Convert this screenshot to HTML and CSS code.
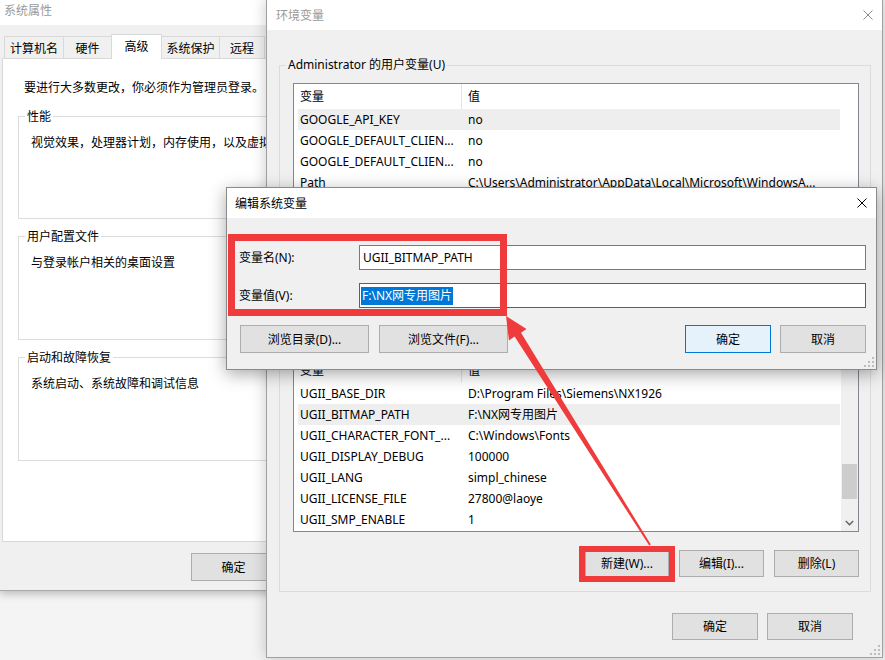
FILE: index.html
```html
<!DOCTYPE html>
<html lang="zh-CN">
<head>
<meta charset="utf-8">
<title>编辑系统变量</title>
<link rel="stylesheet" href="styles.css">
</head>
<body>

<section class="win sysprop">
  <div class="titlebar inactive"><span class="title">系统属性</span></div>
  <div class="sys-body">
    <div class="tabs">
      <div class="tab t1">计算机名</div>
      <div class="tab t2">硬件</div>
      <div class="tab t3 active">高级</div>
      <div class="tab t4">系统保护</div>
      <div class="tab t5">远程</div>
    </div>
    <div class="tabpanel">
      <p class="note">要进行大多数更改，你必须作为管理员登录。</p>
      <div class="group g1">
        <div class="glabel">性能</div>
        <p class="gtext">视觉效果，处理器计划，内存使用，以及虚拟内存</p>
      </div>
      <div class="group g2">
        <div class="glabel">用户配置文件</div>
        <p class="gtext">与登录帐户相关的桌面设置</p>
      </div>
      <div class="group g2">
        <div class="glabel">启动和故障恢复</div>
        <p class="gtext">系统启动、系统故障和调试信息</p>
      </div>
    </div>
    <div class="btnrow sys-btns">
      <button class="btn w85">确定</button>
      <button class="btn w85">取消</button>
      <button class="btn w85">应用(A)</button>
    </div>
  </div>
</section>

<section class="win envvars">
  <div class="titlebar inactive">
    <span class="title">环境变量</span>
    <svg class="close" viewBox="0 0 10 10" width="10" height="10"><path d="M0.5 0.5 L9.5 9.5 M9.5 0.5 L0.5 9.5" stroke="#8a8a8a" stroke-width="1" fill="none"/></svg>
  </div>
  <div class="env-body">
    <div class="egroup eg1">
      <div class="glabel">Administrator 的用户变量(U)</div>
      <div class="listview lv1">
        <div class="lv-main">
          <div class="lv-head"><span class="c1">变量</span><span class="c2">值</span></div>
          <div class="lv-row sel"><span class="c1">GOOGLE_API_KEY</span><span class="c2">no</span></div>
          <div class="lv-row"><span class="c1">GOOGLE_DEFAULT_CLIEN...</span><span class="c2">no</span></div>
          <div class="lv-row"><span class="c1">GOOGLE_DEFAULT_CLIEN...</span><span class="c2">no</span></div>
          <div class="lv-row"><span class="c1">Path</span><span class="c2">C:\Users\Administrator\AppData\Local\Microsoft\WindowsA...</span></div>
        </div>
      </div>
      <div class="btnrow lv-btns">
        <button class="btn b84">新建(N)...</button>
        <button class="btn b85">编辑(E)...</button>
        <button class="btn b85">删除(D)</button>
      </div>
    </div>
    <div class="egroup eg2" aria-label="系统变量(S)">
      <div class="listview lv2">
        <div class="lv-main">
          <div class="lv-head"><span class="c1">变量</span><span class="c2">值</span></div>
          <div class="lv-row"><span class="c1">UGII_BASE_DIR</span><span class="c2">D:\Program Files\Siemens\NX1926</span></div>
          <div class="lv-row sel"><span class="c1">UGII_BITMAP_PATH</span><span class="c2">F:\NX网专用图片</span></div>
          <div class="lv-row"><span class="c1">UGII_CHARACTER_FONT_...</span><span class="c2">C:\Windows\Fonts</span></div>
          <div class="lv-row"><span class="c1">UGII_DISPLAY_DEBUG</span><span class="c2">100000</span></div>
          <div class="lv-row"><span class="c1">UGII_LANG</span><span class="c2">simpl_chinese</span></div>
          <div class="lv-row"><span class="c1">UGII_LICENSE_FILE</span><span class="c2">27800@laoye</span></div>
          <div class="lv-row"><span class="c1">UGII_SMP_ENABLE</span><span class="c2">1</span></div>
        </div>
        <div class="scrollbar">
          <div class="sb-btn"><svg viewBox="0 0 9 6" width="9" height="6"><path d="M0.8 5 L4.5 1.3 L8.2 5" stroke="#606060" stroke-width="1.4" fill="none"/></svg></div>
          <div class="sb-track"><div class="sb-thumb"></div></div>
          <div class="sb-btn"><svg viewBox="0 0 9 6" width="9" height="6"><path d="M0.8 1 L4.5 4.7 L8.2 1" stroke="#606060" stroke-width="1.4" fill="none"/></svg></div>
        </div>
      </div>
      <div class="btnrow lv-btns">
        <button class="btn b84">新建(W)...</button>
        <button class="btn b85">编辑(I)...</button>
        <button class="btn b85">删除(L)</button>
      </div>
    </div>
    <div class="btnrow env-btns">
      <button class="btn b86">确定</button>
      <button class="btn b86">取消</button>
    </div>
  </div>
  <svg class="grip" viewBox="0 0 10 10" width="10" height="10"><g fill="#bdbdbd"><rect x="8" y="0" width="2" height="2"/><rect x="8" y="4" width="2" height="2"/><rect x="4" y="4" width="2" height="2"/><rect x="8" y="8" width="2" height="2"/><rect x="4" y="8" width="2" height="2"/><rect x="0" y="8" width="2" height="2"/></g></svg>
</section>

<section class="win editdlg">
  <div class="titlebar">
    <span class="title">编辑系统变量</span>
    <svg class="close" viewBox="0 0 10 10" width="10" height="10"><path d="M0.5 0.5 L9.5 9.5 M9.5 0.5 L0.5 9.5" stroke="#000" stroke-width="1" fill="none"/></svg>
  </div>
  <div class="dlg-body">
    <div class="field">
      <span class="flabel">变量名(N):</span>
      <div class="finput">UGII_BITMAP_PATH</div>
    </div>
    <div class="field">
      <span class="flabel">变量值(V):</span>
      <div class="finput focus"><span class="seltext">F:\NX网专用图片</span></div>
    </div>
    <div class="btnrow dlg-btns">
      <button class="btn b129">浏览目录(D)...</button>
      <button class="btn b129">浏览文件(F)...</button>
      <button class="btn b86 default ok">确定</button>
      <button class="btn b86">取消</button>
    </div>
  </div>
  <svg class="grip" viewBox="0 0 10 10" width="10" height="10"><g fill="#bdbdbd"><rect x="8" y="0" width="2" height="2"/><rect x="8" y="4" width="2" height="2"/><rect x="4" y="4" width="2" height="2"/><rect x="8" y="8" width="2" height="2"/><rect x="4" y="8" width="2" height="2"/><rect x="0" y="8" width="2" height="2"/></g></svg>
</section>

<div class="hl hl1"></div>
<div class="hl hl2"></div>
<svg class="arrow" viewBox="0 0 885 660" width="885" height="660">
  <polygon points="506,316 526.5,329 521,332.8 650.8,544.6 649.2,545.6 514.6,336.6 509,340.5" fill="#ef3b3b"/>
</svg>

</body>
</html>
```

FILE: styles.css
```css
* { box-sizing: border-box; margin: 0; padding: 0; }
html, body { width: 885px; height: 660px; }
body {
  position: relative;
  overflow: hidden;
  background: #f4f4f4;
  font-family: "Noto Sans", "Noto Sans CJK SC", sans-serif;
  font-size: 12px;
  line-height: 16px;
  color: #000;
}
button { font: inherit; color: inherit; cursor: default; }

/* generic window */
.win {
  position: absolute;
  display: flex;
  flex-direction: column;
  background: #f0f0f0;
  border: 1px solid #aaaaaa;
}
.titlebar {
  flex: none;
  height: 30px;
  padding-top: 2px;
  background: #fff;
  display: flex;
  align-items: center;
  justify-content: space-between;
  white-space: nowrap;
}
.titlebar .title { color: #000; }
.titlebar.inactive .title { color: #9a9a9a; }
.close { flex: none; margin-right: 9px; margin-top: -2px; }
.grip { position: absolute; right: 2px; bottom: 2px; }

.btnrow { display: flex; flex: none; }
.btn {
  height: 27px;
  padding-top: 1px;
  background: #e1e1e1;
  border: 1px solid #adadad;
  display: flex;
  align-items: center;
  justify-content: center;
  white-space: nowrap;
}
.btn.default { background: #e5f1fb; border-color: #0078d7; }
.w85 { width: 85px; height: 28px; }
.b84 { width: 84px; }
.b85 { width: 85px; }
.b86 { width: 86px; }
.b129 { width: 129px; height: 28px; }

/* ---------- 系统属性 ---------- */
.sysprop {
  left: -1px;
  top: -6px;
  width: 476px;
  height: 597px;
  z-index: 1;
  border-left: 0;
  box-shadow: 0 2px 9px rgba(0, 0, 0, 0.28);
}
.sysprop .titlebar { padding-left: 5px; }
.sys-body {
  flex: 1;
  display: flex;
  flex-direction: column;
  padding-top: 9px;
}
.tabs {
  display: flex;
  align-items: flex-end;
  height: 25px;
  margin: 0 0 -1px 5px;
  position: relative;
  z-index: 1;
}
.tab {
  height: 22px;
  padding-top: 2px;
  margin-bottom: 1px;
  margin-left: -1px;
  border: 1px solid #d9d9d9;
  border-bottom: 0;
  background: #f0f0f0;
  display: flex;
  align-items: center;
  justify-content: center;
  white-space: nowrap;
}
.t1 { width: 60px; margin-left: 0; }
.t2 { width: 49px; }
.t3 { width: 51px; }
.t4 { width: 59px; }
.t5 { width: 46px; }
.tab.active {
  height: 25px;
  padding-top: 0;
  margin-bottom: 0;
  background: #fff;
  position: relative;
  z-index: 2;
}
.tabpanel {
  flex: none;
  height: 484px;
  margin: 0 3px;
  background: #fff;
  border: 1px solid #d9d9d9;
  padding: 21px 15px 0 15px;
}
.note { margin-left: 6px; white-space: nowrap; }
.group {
  border: 1px solid #dcdcdc;
  height: 104px;
  margin-top: 17px;
}
.group.g1 { height: 103px; margin-top: 20px; }
.glabel {
  width: fit-content;
  margin: -9px 0 0 6px;
  padding: 0 2px;
  background: #fff;
  white-space: nowrap;
}
.group .glabel { margin-top: -8px; }
.gtext { margin: 10px 0 0 12px; white-space: nowrap; }
.sys-btns {
  margin-top: 11px;
  justify-content: flex-end;
  gap: 9px;
  padding-right: 10px;
}

/* ---------- 环境变量 ---------- */
.envvars {
  left: 266px;
  top: -1px;
  width: 617px;
  height: 659px;
  z-index: 2;
  border-color: #a0a0a0;
  box-shadow: 0 0 14px rgba(0, 0, 0, 0.22);
}
.envvars .titlebar { padding-left: 9px; }
.env-body {
  flex: 1;
  display: flex;
  flex-direction: column;
  padding: 35px 11px 0 12px;
}
.egroup { border: 1px solid #dcdcdc; flex: none; }
.egroup .glabel { background: #f0f0f0; }
.eg1 { height: 258px; }
.eg2 { height: 252px; margin-top: 17px; }
.listview {
  margin: 10px 11px 0 13px;
  border: 1px solid #828790;
  background: #fff;
  display: flex;
  overflow: hidden;
}
.lv1 { height: 182px; }
.lv2 { height: 175px; margin-top: 16px; }
.lv-main { flex: 1; padding-left: 4px; overflow: hidden; }
.lv-head, .lv-row {
  display: flex;
  width: 542px;
  white-space: nowrap;
}
.lv-head { height: 25px; align-items: center; }
.lv-row { height: 21px; line-height: 21px; }
.lv-row.sel { background: #eeeeee; }
.c1 { width: 164px; flex: none; padding-left: 2px; overflow: hidden; }
.lv-head .c1 { height: 25px; line-height: 25px; border-right: 1px solid #e5e5e5; }
.lv-head .c2 { line-height: 25px; }
.c2 { flex: 1; padding-left: 6px; overflow: hidden; }
.scrollbar {
  width: 17px;
  flex: none;
  background: #f0f0f0;
  display: flex;
  flex-direction: column;
}
.sb-btn {
  height: 17px;
  flex: none;
  display: flex;
  align-items: center;
  justify-content: center;
}
.sb-track { flex: 1; padding-top: 89px; }
.sb-thumb { height: 35px; margin: 0 1px; background: #cdcdcd; }
.lv-btns {
  margin: 18px 11px 0 0;
  justify-content: flex-end;
  gap: 10px;
}
.env-btns {
  margin: 21px 18px 0 0;
  justify-content: flex-end;
  gap: 9px;
}

/* ---------- 编辑系统变量 ---------- */
.editdlg {
  left: 226px;
  top: 187px;
  width: 651px;
  height: 183px;
  z-index: 3;
  border-color: #8a8a8a;
  box-shadow: 0 4px 16px rgba(0, 0, 0, 0.35);
}
.editdlg .titlebar { padding-left: 8px; }
.dlg-body {
  flex: 1;
  padding: 27px 10px 16px 12px;
}
.field { display: flex; align-items: center; height: 25px; }
.field + .field { margin-top: 13px; }
.flabel { width: 120px; flex: none; white-space: nowrap; padding-top: 1px; }
.finput {
  flex: 1;
  height: 25px;
  border: 1px solid #7a7a7a;
  background: #fff;
  padding-left: 3px;
  display: flex;
  align-items: center;
  white-space: nowrap;
}
.finput.focus { border-color: #0078d7; padding-left: 1px; }
.seltext {
  background: #0078d7;
  color: #fff;
  line-height: 18px;
  padding: 0 1px;
}
.dlg-btns { margin-top: 17px; gap: 10px; padding-left: 1px; }
.dlg-btns .btn { height: 28px; }
.dlg-btns .ok { margin-left: auto; margin-right: -1px; }

/* ---------- annotations ---------- */
.hl {
  position: absolute;
  border: 7px solid #ef3b3b;
  z-index: 4;
}
.hl1 { left: 228px; top: 234px; width: 279px; height: 82px; }
.hl2 { left: 579px; top: 546px; width: 96px; height: 36px; border-width: 6px; }
.arrow {
  position: absolute;
  left: 0;
  top: 0;
  z-index: 5;
  pointer-events: none;
}
```
